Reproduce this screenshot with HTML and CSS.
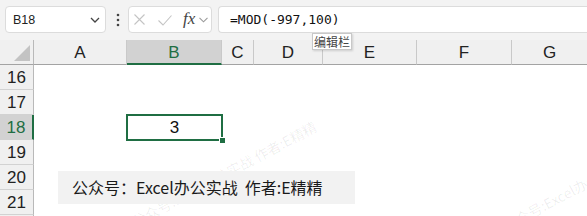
FILE: index.html
```html
<!DOCTYPE html>
<html lang="zh">
<head>
<meta charset="utf-8">
<link rel="stylesheet" href="styles.css">
</head>
<body>
<div class="app">
  <div class="toolbar">
    <div class="namebox">
      <span class="name">B18</span>
      <svg class="chev" width="10" height="6" viewBox="0 0 10 6"><polyline points="1,1 5,5 9,1" fill="none" stroke="#444" stroke-width="1.3"/></svg>
    </div>
    <svg class="dots" width="4" height="14" viewBox="0 0 4 14"><circle cx="2" cy="2" r="1.3" fill="#444"/><circle cx="2" cy="7" r="1.3" fill="#444"/><circle cx="2" cy="12" r="1.3" fill="#444"/></svg>
    <div class="funcbox">
      <svg class="ico-x" width="11" height="11" viewBox="0 0 11 11"><path d="M0.5 0.5 L10.5 10.5 M10.5 0.5 L0.5 10.5" stroke="#c4c4c4" stroke-width="1.1" fill="none"/></svg>
      <svg class="ico-check" width="14" height="11" viewBox="0 0 14 11"><polyline points="0.5,5.5 5,10 13.5,0.5" fill="none" stroke="#c4c4c4" stroke-width="1.1"/></svg>
      <span class="fx">fx</span>
      <svg class="chev-small" width="9" height="6" viewBox="0 0 9 6"><polyline points="0.5,0.8 4.5,4.8 8.5,0.8" fill="none" stroke="#9a9a9a" stroke-width="1.1"/></svg>
    </div>
    <div class="formula">=MOD(-997,100)</div>
  </div>

  <div class="sheet">
    <div class="corner"><svg width="16" height="16" viewBox="0 0 16 16"><polygon points="16,0 16,16 0,16" fill="#c3c3c3"/></svg></div>
    <div class="colhdr">A</div>
    <div class="colhdr sel">B</div>
    <div class="colhdr">C</div>
    <div class="colhdr">D</div>
    <div class="colhdr">E</div>
    <div class="colhdr">F</div>
    <div class="colhdr last">G</div>

    <div class="rowhdr">16</div><div class="cell"></div><div class="cell"></div><div class="cell"></div><div class="cell"></div><div class="cell"></div><div class="cell"></div><div class="cell"></div>
    <div class="rowhdr">17</div><div class="cell"></div><div class="cell"></div><div class="cell"></div><div class="cell"></div><div class="cell"></div><div class="cell"></div><div class="cell"></div>
    <div class="rowhdr sel">18</div><div class="cell"></div><div class="cell active">3<span class="handle"></span></div><div class="cell"></div><div class="cell"></div><div class="cell"></div><div class="cell"></div><div class="cell"></div>
    <div class="rowhdr">19</div><div class="cell"></div><div class="cell"></div><div class="cell"></div><div class="cell"></div><div class="cell"></div><div class="cell"></div><div class="cell"></div>
    <div class="rowhdr">20</div><div class="cell"></div><div class="cell"></div><div class="cell"></div><div class="cell"></div><div class="cell"></div><div class="cell"></div><div class="cell"></div>
    <div class="rowhdr">21</div><div class="cell"></div><div class="cell"></div><div class="cell"></div><div class="cell"></div><div class="cell"></div><div class="cell"></div><div class="cell"></div>
    <div class="rowhdr"></div><div class="cell"></div><div class="cell"></div><div class="cell"></div><div class="cell"></div><div class="cell"></div><div class="cell"></div><div class="cell"></div>
  </div>

  <span class="watermark wm1">公众号:Excel办公实战 作者:E精精</span>
  <span class="watermark wm2">公众号:Excel办公实战 作者:E精精</span>

  <div class="banner">公众号：Excel办公实战<span class="gap">作者:E精精</span></div>

  <div class="tooltip">编辑栏</div>
</div>
</body>
</html>
```

FILE: styles.css
```css
html, body {
  margin: 0;
  padding: 0;
  background: #ffffff;
}
.app {
  position: relative;
  width: 587px;
  height: 216px;
  overflow: hidden;
  font-family: "Liberation Sans", Arial, sans-serif;
}
.toolbar {
  height: 40px;
  background: #f3f3f3;
  display: flex;
  align-items: flex-start;
  padding: 6px 0 0 5px;
  box-sizing: border-box;
}
.namebox {
  width: 101px;
  height: 27px;
  box-sizing: border-box;
  background: #fff;
  border: 1px solid #dcdcdc;
  border-radius: 4px;
  display: flex;
  align-items: center;
  padding: 0 5px 0 7px;
}
.name {
  flex: 1;
  font-size: 12.5px;
  color: #222;
}
.chev { margin-top: 1px; }
.dots {
  margin: 7px 8px 0 10px;
}
.funcbox {
  width: 84px;
  height: 27px;
  box-sizing: border-box;
  background: #fff;
  border: 1px solid #dcdcdc;
  border-radius: 4px;
  display: flex;
  align-items: center;
  padding: 0 0 0 5px;
}
.ico-x { margin-right: 13px; }
.ico-check { margin-right: 11px; margin-top: 1px; }
.fx {
  font-family: "Liberation Serif", "Times New Roman", serif;
  font-style: italic;
  font-size: 17px;
  color: #444;
  margin-right: 4px;
  line-height: 1;
  margin-top: -2px;
}
.chev-small { margin-top: 1px; }
.formula {
  margin-left: 6px;
  flex: 1;
  height: 27px;
  box-sizing: border-box;
  background: #fff;
  border: 1px solid #dcdcdc;
  border-right: none;
  border-radius: 4px 0 0 4px;
  padding-left: 11px;
  font-family: "DejaVu Sans Mono", "Liberation Mono", monospace;
  font-size: 13px;
  line-height: 25px;
  color: #111;
}
.sheet {
  display: grid;
  grid-template-columns: 34px 93px 95px 32px 69px 94px 95px 1fr;
  grid-template-rows: 25px repeat(7, 25px);
  font-size: 17px;
  color: #222;
}
.corner {
  background: #f0f0f0;
  border-right: 1px solid #b9b9b9;
  border-bottom: 1px solid #a3a3a3;
  box-sizing: border-box;
  display: flex;
  align-items: flex-end;
  justify-content: flex-end;
  padding: 0 3px 3px 0;
}
.colhdr {
  background: #f0f0f0;
  border-right: 1px solid #c9c9c9;
  border-bottom: 1px solid #a3a3a3;
  box-sizing: border-box;
  display: flex;
  align-items: center;
  justify-content: center;
  padding-top: 2px;
}
.colhdr.last { border-right: none; }
.colhdr.sel {
  background: #d2d2d2;
  color: #1f6e43;
  border-bottom: 2px solid #1f6e43;
  padding-top: 3px;
}
.rowhdr {
  background: #f0f0f0;
  border-right: 1px solid #b9b9b9;
  border-bottom: 1px solid #d2d2d2;
  box-sizing: border-box;
  display: flex;
  align-items: center;
  justify-content: center;
  padding-top: 1px;
}
.rowhdr.sel {
  background: #d2d2d2;
  color: #1f6e43;
  border-right: 2px solid #1f6e43;
}
.cell {
  position: relative;
}
.cell.active {
  outline: 2px solid #1f6e43;
  outline-offset: -1px;
  display: flex;
  align-items: center;
  justify-content: center;
  font-size: 17px;
  color: #111;
  padding-top: 1px;
  box-sizing: border-box;
  z-index: 2;
}
.handle {
  position: absolute;
  right: -4px;
  bottom: -4px;
  width: 5px;
  height: 5px;
  background: #1f6e43;
  border: 1px solid #fff;
}
.watermark {
  position: absolute;
  font-family: "Noto Sans CJK SC", sans-serif;
  font-size: 14px;
  line-height: 16px;
  color: rgba(0, 0, 0, 0.07);
  white-space: nowrap;
  transform-origin: 0 50%;
  transform: rotate(-28deg);
  z-index: 3;
}
.wm1 { left: 133px; top: 214px; }
.wm2 { left: 504px; top: 218px; }
.banner {
  position: absolute;
  left: 58px;
  top: 171px;
  width: 297px;
  height: 33px;
  background: #f2f2f2;
  box-sizing: border-box;
  padding-left: 14px;
  font-family: "Noto Sans CJK SC", sans-serif;
  font-size: 16px;
  line-height: 33px;
  color: #1a1a1a;
  white-space: nowrap;
  z-index: 4;
}
.gap { margin-left: 7px; }
.tooltip {
  position: absolute;
  left: 312px;
  top: 33px;
  width: 40px;
  height: 17px;
  box-sizing: border-box;
  background: #fff;
  border: 1px solid #c8c8c8;
  box-shadow: 1px 1px 2px rgba(0,0,0,0.15);
  font-family: "Noto Sans CJK SC", sans-serif;
  font-size: 12px;
  line-height: 15px;
  text-align: center;
  color: #444;
  z-index: 5;
}
```
